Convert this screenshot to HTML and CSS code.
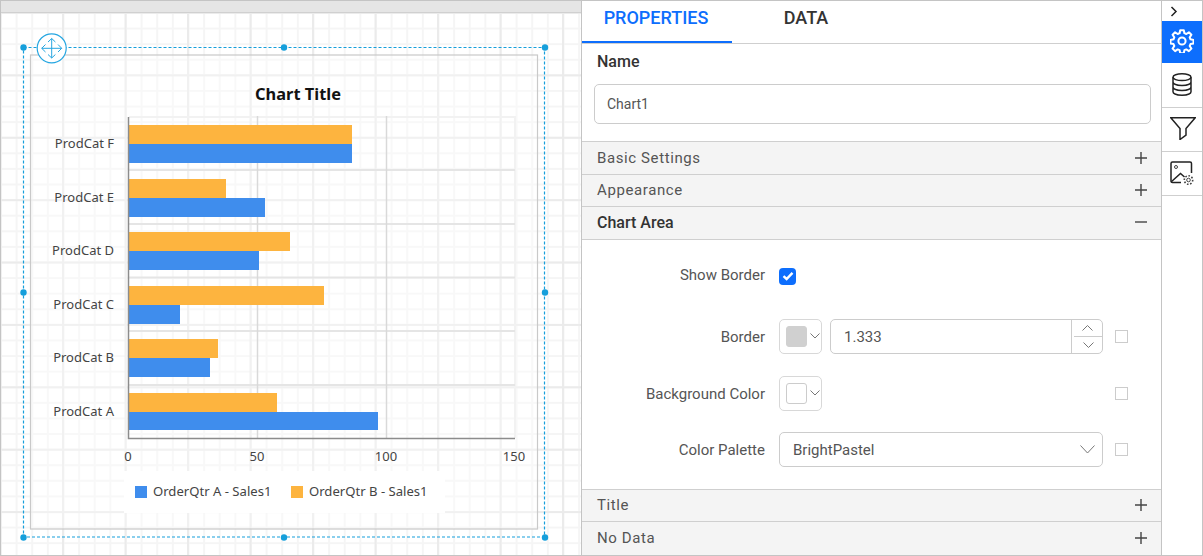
FILE: index.html
```html
<!DOCTYPE html>
<html lang="en">
<head>
<meta charset="utf-8">
<title>Chart properties</title>
<link rel="stylesheet" href="styles.css">
</head>
<body>
<div class="app">
  <main class="canvas">
    <div class="ruler"></div>
    <div class="grid"></div>
    <svg class="chart" width="580" height="556" viewBox="0 0 580 556" xmlns="http://www.w3.org/2000/svg">
      <rect class="chart-frame" x="30.500" y="55" width="507" height="474"/>
      <rect class="legend-bg" x="124" y="471" width="321" height="42"/>
      <text class="title" x="298" y="100" text-anchor="middle">Chart Title</text>

      <g class="gridline">
        <path class="grid-edge" d="M129 117H515V438"/>
        <path class="grid-h" d="M129 170H515M129 224H515M129 277.500H515M129 331H515M129 385H515"/>
        <path class="grid-v" d="M257.500 116V438M386.500 116V438"/>
      </g>

      <g class="bar-b">
        <rect x="129" y="125" width="223" height="19"/>
        <rect x="129" y="179" width="97" height="19"/>
        <rect x="129" y="232" width="161" height="19"/>
        <rect x="129" y="286" width="195" height="19"/>
        <rect x="129" y="339" width="89" height="19"/>
        <rect x="129" y="393" width="148" height="19"/>
      </g>
      <g class="bar-a">
        <rect x="129" y="144" width="223" height="19"/>
        <rect x="129" y="198" width="136" height="19"/>
        <rect x="129" y="251" width="130" height="19"/>
        <rect x="129" y="305" width="51" height="19"/>
        <rect x="129" y="358" width="81" height="19"/>
        <rect x="129" y="412" width="249" height="18"/>
      </g>
      <path class="axis" d="M128.500 117V438.500H515"/>

      <g class="label" text-anchor="end">
        <text x="114" y="148">ProdCat F</text>
        <text x="114" y="202">ProdCat E</text>
        <text x="114" y="255">ProdCat D</text>
        <text x="114" y="309">ProdCat C</text>
        <text x="114" y="362">ProdCat B</text>
        <text x="114" y="416">ProdCat A</text>
      </g>
      <g class="label" text-anchor="middle">
        <text x="128" y="461">0</text>
        <text x="257" y="461">50</text>
        <text x="386" y="461">100</text>
        <text x="514" y="461">150</text>
      </g>

      <rect class="bar-a" x="135" y="486" width="12" height="12"/>
      <text class="label legend-text" x="153" y="496">OrderQtr A - Sales1</text>
      <rect class="bar-b" x="291" y="486" width="12" height="12"/>
      <text class="label legend-text" x="309" y="496">OrderQtr B - Sales1</text>

      <rect class="select" x="23.500" y="47.500" width="521" height="489.500"/>
      <g class="handle">
        <circle cx="23.500" cy="47.500" r="3.200"/><circle cx="284" cy="47.500" r="3.200"/><circle cx="545" cy="47.500" r="3.200"/>
        <circle cx="23.500" cy="292.500" r="3.200"/><circle cx="545" cy="292.500" r="3.200"/>
        <circle cx="23.500" cy="537.500" r="3.200"/><circle cx="284" cy="537.500" r="3.200"/><circle cx="545" cy="537.500" r="3.200"/>
      </g>
      <circle class="move-ring" cx="51.700" cy="48.300" r="14.500"/>
      <path class="move-arrows" d="M51.700 38.500V58M41.700 48.300H61.700M48 42L51.700 38.500L55.400 42M48 54.500L51.700 58L55.400 54.500M45.500 44.500L41.700 48.300L45.500 52M58 44.500L61.700 48.300L58 52"/>
    </svg>
  </main>

  <section class="panel">
    <nav class="tabs">
      <div class="tab tab-active">PROPERTIES</div>
      <div class="tab">DATA</div>
    </nav>
    <div class="name-block">
      <div class="name-label">Name</div>
      <div class="name-input">Chart1</div>
    </div>

    <div class="section">Basic Settings<svg class="sign" width="12" height="12" viewBox="0 0 12 12"><path d="M0 6H12M6 0V12"/></svg></div>
    <div class="section section-short">Appearance<svg class="sign" width="12" height="12" viewBox="0 0 12 12"><path d="M0 6H12M6 0V12"/></svg></div>
    <div class="section section-open">Chart Area<svg class="sign" width="12" height="12" viewBox="0 0 12 12"><path d="M0 6H12"/></svg></div>

    <div class="form">
      <div class="field field-show">
        <label class="field-label">Show Border</label>
        <span class="check">
          <svg width="12" height="10" viewBox="0 0 12 10"><path class="check-mark" d="M1.500 5.200L4.600 8L10.500 1.800"/></svg>
        </span>
      </div>
      <div class="field field-border">
        <label class="field-label">Border</label>
        <div class="color-pick"><span class="swatch swatch-grey"></span><svg class="chev-small" width="10" height="6" viewBox="0 0 10 6"><path d="M0.500 0.500L5 5L9.500 0.500"/></svg></div>
        <div class="number">
          <span class="number-value">1.333</span>
          <span class="spin">
            <span class="spin-btn"><svg class="chev-small" width="11" height="6" viewBox="0 0 11 6"><path d="M0.500 5.500L5.500 0.500L10.500 5.500"/></svg></span>
            <span class="spin-btn spin-down"><svg class="chev-small" width="11" height="6" viewBox="0 0 11 6"><path d="M0.500 0.500L5.500 5.500L10.500 0.500"/></svg></span>
          </span>
        </div>
        <span class="mini-check"></span>
      </div>
      <div class="field">
        <label class="field-label">Background Color</label>
        <div class="color-pick"><span class="swatch"></span><svg class="chev-small" width="10" height="6" viewBox="0 0 10 6"><path d="M0.500 0.500L5 5L9.500 0.500"/></svg></div>
        <span class="spacer"></span>
        <span class="mini-check"></span>
      </div>
      <div class="field">
        <label class="field-label">Color Palette</label>
        <div class="select-box">BrightPastel<svg class="chev-big" width="15" height="9" viewBox="0 0 15 9"><path d="M0.500 0.500L7.500 8L14.500 0.500"/></svg></div>
        <span class="mini-check"></span>
      </div>
    </div>

    <div class="section section-title">Title<svg class="sign" width="12" height="12" viewBox="0 0 12 12"><path d="M0 6H12M6 0V12"/></svg></div>
    <div class="section section-last">No Data<svg class="sign" width="12" height="12" viewBox="0 0 12 12"><path d="M0 6H12M6 0V12"/></svg></div>
  </section>

  <aside class="rail">
    <div class="rail-top"><svg width="9" height="13" viewBox="0 0 9 13"><path class="ico" d="M1.500 2L6 6.500L1.500 11"/></svg></div>
    <div class="rail-item rail-active">
      <svg width="24" height="24" viewBox="0 0 24 24"><path class="ico ico-white" d="M10.200 1.200h3.600l.6 3 1.900.8 2.600-1.700 2.500 2.500-1.700 2.600.8 1.900 3 .6v3.600l-3 .6-.8 1.900 1.700 2.600-2.500 2.500-2.600-1.700-1.900.8-.6 3h-3.600l-.6-3-1.900-.8-2.600 1.700-2.500-2.500 1.700-2.600-.8-1.900-3-.6v-3.600l3-.6.8-1.900-1.700-2.600 2.500-2.500 2.600 1.700 1.900-.8z"/><circle class="ico ico-white" cx="12" cy="12" r="3.600"/></svg>
    </div>
    <div class="rail-item rail-item-first">
      <svg width="20" height="23" viewBox="0 0 20 23"><ellipse class="ico" cx="10" cy="4.200" rx="9" ry="3.400"/><path class="ico" d="M1 4.200V18.800C1 20.800 5 22.200 10 22.200S19 20.800 19 18.800V4.200M1 9C1 11 5 12.400 10 12.400S19 11 19 9M1 14C1 16 5 17.400 10 17.400S19 16 19 14"/></svg>
    </div>
    <div class="rail-item">
      <svg class="ico-funnel" width="26" height="23" viewBox="0 0 26 23"><path class="ico" d="M0.800 0.800H25.200L16 11.500V18L10 22.500V11.500Z"/></svg>
    </div>
    <div class="rail-item">
      <svg width="24" height="24" viewBox="0 0 24 24">
        <path class="ico" d="M11 21.500H2.500Q1 21.500 1 20V2.500Q1 1 2.500 1H20Q21.500 1 21.500 2.500V12"/>
        <path class="ico" d="M1 21L10.500 12.500L14.500 16"/>
        <circle class="ico ico-thin" cx="6" cy="6" r="1.500"/>
        <circle class="ico ico-thin" cx="18.500" cy="19" r="1.800"/>
        <circle class="ico ico-thin ico-dash" cx="18.500" cy="19" r="4.200"/>
      </svg>
    </div>
  </aside>
</div>
</body>
</html>
```
FILE: styles.css
```css
* { box-sizing: border-box; }
html, body { margin: 0; padding: 0; background: #fff; }
body { font-family: Roboto, "Liberation Sans", sans-serif; color: #333; }

.app { display: flex; width: 1203px; height: 556px; overflow: hidden; }

/* designer canvas */
.canvas { position: relative; flex: 0 0 581px; height: 556px; display: flex; flex-direction: column; border-left: 1px solid #c4c4c4; border-bottom: 1px solid #c4c4c4; }
.ruler { flex: 0 0 13px; background: #e5e5e5; border-top: 1px solid #c4c4c4; border-bottom: 1px solid #d0d0d0; }
.grid {
  flex: 1;
  background-color: #fff;
  background-image:
    linear-gradient(to right, #ebebeb 2px, transparent 2px),
    linear-gradient(to bottom, #ebebeb 2px, transparent 2px),
    linear-gradient(to right, #f5f5f5 2px, transparent 2px),
    linear-gradient(to bottom, #f5f5f5 2px, transparent 2px);
  background-size: 62.500px 62.400px, 62.500px 62.400px, 15.625px 15.600px, 15.625px 15.600px;
  background-position: 61px 0, 0 -1px, -1px 0, 0 -1px;
}
.chart { position: absolute; left: -1px; top: 0; display: block; }
.chart-frame { fill: rgba(255,255,255,.3); stroke: #c9c9c9; stroke-width: 1.200; }
.legend-bg { fill: #fff; }
.title { font: 700 16.400px "Noto Sans", "Open Sans", sans-serif; fill: #111; }
.label { font: 400 13px "Noto Sans", "Open Sans", sans-serif; fill: #444; }
.legend-text { font-size: 13.100px; }
.label text { font: inherit; }
.grid-edge { fill: none; stroke: #f2f2f2; stroke-width: 2; }
.grid-h { fill: none; stroke: #e5e5e5; stroke-width: 2; }
.grid-v { fill: none; stroke: #d9d9d9; stroke-width: 1.500; }
.bar-a { fill: #3f8ded; }
.bar-b { fill: #fdb43f; }
.axis { fill: none; stroke: #8c8c8c; stroke-width: 1.500; }
.select { fill: none; stroke: #169fdb; stroke-width: 1.200; stroke-dasharray: 3 2; }
.handle circle { fill: #169fdb; }
.move-ring { fill: #fff; stroke: #25a6e1; stroke-width: 1.200; }
.move-arrows { fill: none; stroke: #25a6e1; stroke-width: 1; }

/* properties panel */
.panel { flex: 0 0 581px; height: 556px; display: flex; flex-direction: column; border: 1px solid #c4c4c4; background: #fff; }
.tabs { flex: 0 0 42px; display: flex; border-bottom: 1px solid #cfcfcf; }
.tab { width: 150px; height: 42px; padding: 7px 2px 0 0; text-align: center; font-size: 18px; font-weight: 500; line-height: 20px; color: #333; }
.tab-active { color: #0d6efd; border-bottom: 2px solid #0d6efd; }

.name-block { flex: 0 0 97px; padding: 8px 10px 0 12px; }
.name-label { padding-left: 3px; font-size: 16px; font-weight: 500; line-height: 20px; color: #333; }
.name-input { height: 40px; margin-top: 12px; padding-left: 12px; border: 1px solid #ccc; border-radius: 5px; font-size: 14px; line-height: 38px; color: #555; }

.section { display: flex; align-items: center; justify-content: space-between; height: 33px; padding: 0 14px 1px 15px; background: #f4f4f4; border-top: 1px solid #cfcfcf; font-size: 15px; letter-spacing: .6px; color: #555; }
.section-short { height: 32px; }
.section-open { height: 34px; padding-bottom: 2px; border-bottom: 1px solid #cfcfcf; font-size: 16px; font-weight: 500; letter-spacing: 0; color: #333; }
.section-title { height: 32px; }
.section-last { height: 34px; padding-bottom: 2px; }
.sign { flex: none; }
.sign path { fill: none; stroke: #444; stroke-width: 1.400; }

.form { flex: 1; display: flex; flex-direction: column; gap: 22px; padding-top: 18px; }
.field { display: flex; align-items: center; height: 34px; }
.field-show { margin-bottom: 5px; }
.field-border { margin-bottom: 1px; }
.field-label { flex: 0 0 183px; padding-top: 2px; text-align: right; margin-right: 14px; font-size: 15px; color: #555; }
.field-show .field-label { padding-top: 0; }
.check { display: flex; align-items: center; justify-content: center; width: 17px; height: 17px; background: #0d6efd; border-radius: 4px; margin-top: 2px; }
.check-mark { fill: none; stroke: #fff; stroke-width: 2.400; }
.color-pick { display: flex; align-items: center; gap: 3px; width: 43px; height: 35px; padding-left: 6px; border: 1px solid #d8d8d8; border-radius: 5px; }
.swatch { flex: 0 0 21px; height: 21px; border: 1px solid #ccc; border-radius: 3px; background: #fff; }
.swatch-grey { background: #d0d0d0; border-color: #d0d0d0; }
.chev-small path, .chev-big path { fill: none; stroke: #777; stroke-width: 1; }
.number { display: flex; align-items: center; width: 273px; height: 35px; margin-left: 8px; padding-left: 13px; border: 1px solid #ccc; border-radius: 5px; font-size: 15px; color: #555; }
.number-value { flex: 1; padding-top: 1px; }
.spin { display: flex; flex-direction: column; width: 31px; height: 100%; border-left: 1px solid #ccc; }
.spin-btn { flex: 1; display: flex; align-items: center; justify-content: center; }
.spin-down { border-top: 1px solid #ccc; margin-left: 2px; }
.spacer { width: 281px; }
.mini-check { width: 13px; height: 13px; margin-left: 12px; border: 1px solid #ccc; background: #fff; }
.select-box { display: flex; align-items: center; justify-content: space-between; width: 324px; height: 35px; padding: 1px 7px 0 13px; border: 1px solid #ccc; border-radius: 5px; font-size: 15px; color: #555; }

/* side rail */
.rail { flex: 0 0 41px; height: 556px; display: flex; flex-direction: column; background: #fff; border: 1px solid #c4c4c4; border-left: 0; }
.rail-top { flex: 0 0 20px; display: flex; align-items: center; padding-left: 8px; }
.rail-item { flex: 0 0 44px; display: flex; align-items: center; justify-content: center; padding-bottom: 2px; border-bottom: 1px solid #cfcfcf; }
.rail-item-first { flex-basis: 45px; }
.rail-active { flex-basis: 42px; background: #0d6efd; border-bottom: 0; }
.ico-funnel { margin-left: 2px; }
.ico { fill: none; stroke: #222; stroke-width: 1.500; }
.ico-white { stroke: #fff; stroke-width: 2; stroke-linejoin: round; }
.ico-thin { stroke-width: 1; stroke: #444; }
.ico-dash { stroke-width: 1.600; stroke-dasharray: 1.600 1.600; }
```
